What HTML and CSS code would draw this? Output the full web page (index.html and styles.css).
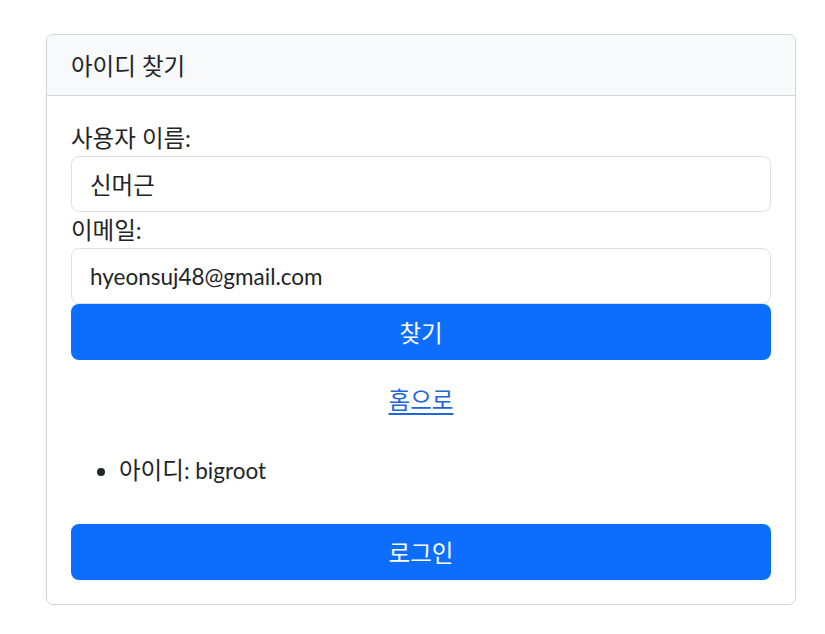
FILE: index.html
```html
<!DOCTYPE html>
<html lang="ko">
<head>
<meta charset="utf-8">
<title>아이디 찾기</title>
<link rel="stylesheet" href="styles.css">
</head>
<body>
<div class="page">
  <div class="card">
    <div class="card-header">아이디 찾기</div>
    <div class="card-body">
      <form class="form">
        <label class="label" for="name">사용자 이름:</label>
        <input class="input input-name" id="name" type="text" value="신머근">
        <label class="label" for="email">이메일:</label>
        <input class="input input-email" id="email" type="email" value="hyeonsuj48@gmail.com">
        <button class="btn" type="button">찾기</button>
      </form>
      <div class="home"><a href="#" class="home-link">홈으로</a></div>
      <ul class="result">
        <li><span class="key">아이디</span><span class="val">: bigroot</span></li>
      </ul>
      <button class="btn" type="button">로그인</button>
    </div>
  </div>
</div>
</body>
</html>
```

FILE: styles.css
```css
* { box-sizing: border-box; }
html, body { margin: 0; padding: 0; background: #fff; }
body {
  font-family: "Lato", "Noto Sans CJK KR", sans-serif;
  color: #212529;
  font-size: 23.5px;
}
.page {
  padding: 34px 29px 0 46px;
}
.card {
  width: 750px;
  border: 1px solid #d3d4d6;
  border-radius: 7px;
  overflow: hidden;
}
.card-header {
  background: #f8f9fa;
  border-bottom: 1px solid #d3d4d6;
  height: 61px;
  padding: 0 24px;
  display: flex;
  align-items: center;
  font-size: 23.5px;
}
.card-body {
  padding: 24px;
  display: flex;
  flex-direction: column;
}
.form {
  display: flex;
  flex-direction: column;
}
.label {
  display: block;
  height: 36px;
  line-height: 36px;
  font-size: 23.5px;
}
.input {
  height: 56px;
  width: 100%;
  border: 1px solid #dee2e6;
  border-radius: 8px;
  padding: 0 18px;
  font-family: inherit;
  color: #212529;
  background: #fff;
  outline: none;
}
.input-name { font-size: 23.5px; }
.input-email { font-size: 22.5px; }
.btn {
  height: 56px;
  width: 100%;
  border: none;
  border-radius: 8px;
  background: #0d6efd;
  color: #fff;
  font-family: inherit;
  font-size: 23.5px;
  cursor: pointer;
}
.home {
  margin-top: 20px;
  height: 40px;
  line-height: 40px;
  text-align: center;
}
.home-link {
  color: #2166d8;
  text-decoration: underline;
  text-underline-offset: 4px;
  font-size: 23.5px;
}
.result {
  margin: 32px 0 36px 0;
  padding-left: 48px;
}
.result li {
  line-height: 36px;
  height: 36px;
}
.key { font-size: 23.5px; }
.val { font-size: 22.5px; }
```
